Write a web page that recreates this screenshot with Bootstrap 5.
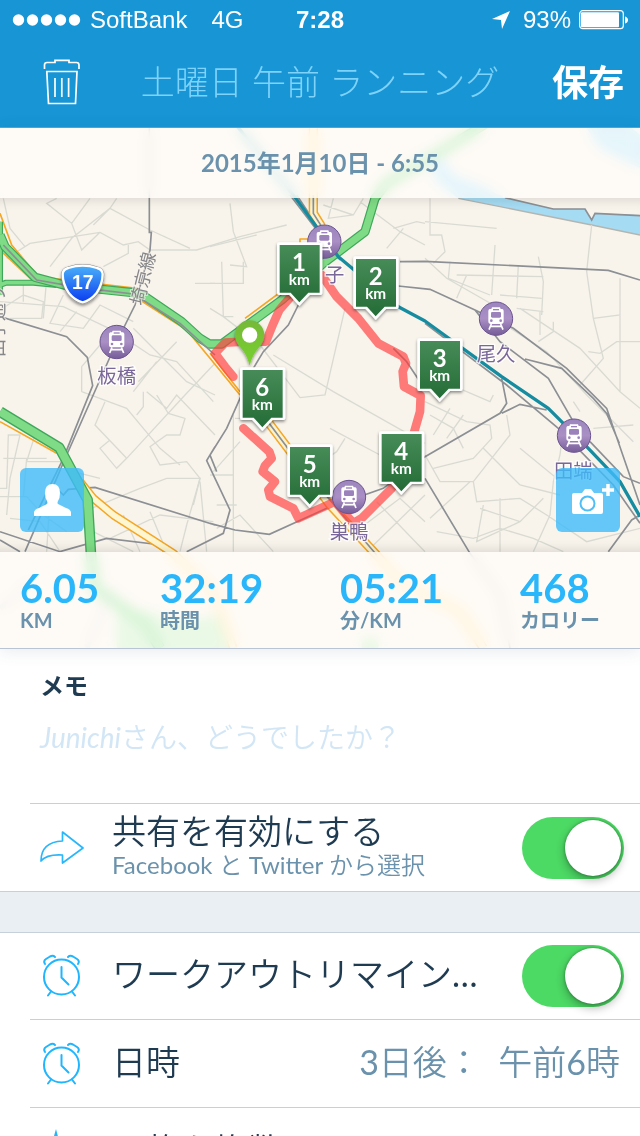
<!DOCTYPE html>
<html lang="ja">
<head>
<meta charset="utf-8">
<meta name="viewport" content="width=device-width, initial-scale=1">
<title>ワークアウト</title>
<link href="https://cdn.jsdelivr.net/npm/bootstrap@5.3.0/dist/css/bootstrap.min.css" rel="stylesheet">
<style>
  :root { --sky:#1795d4; --accent:#29b6fb; --ink:#1f3b52; --slate:#6b92ac; --rule:#c6d0da; --thin: Lato, "Noto Sans CJK JP DemiLight", "Noto Sans CJK JP", sans-serif; }
  body { font-family: Lato, "Noto Sans CJK JP", sans-serif; color: var(--ink); background:#fff; }
  .app-head { background: var(--sky); color:#fff; border-bottom:1px solid #6f9fb8; }
  .status { height:40px; font-family:"Liberation Sans", sans-serif; font-size:24px; display:grid; grid-template-columns:1fr auto 1fr; padding:0 12px; }
  .status svg { flex:none; }
  .nav-row { height:87px; padding-bottom:4px; }
  .title-field { font-size:34px; font-weight:300; color:#fff; min-width:0; font-family:Lato, "Noto Sans CJK JP", sans-serif; }
  .title-field::placeholder { color:#7fd2fa; opacity:1; }
  .bar-btn { width:124px; flex:none; border:0; background:none; color:#fff; padding:0; }
  .save-btn { font-size:36px; font-weight:700; padding-right:16px; line-height:48px; }
  .map-zone { background:#f8f4ec; border-bottom:1px solid #b9c5d4; box-shadow:0 2px 16px rgba(60,80,120,.12); }
  .map-zone > svg { inset:0; }
  .frost { background:rgba(255,253,250,.76); backdrop-filter:blur(6px) saturate(1.4); }
  .date-bar { height:70px; font-size:24px; font-weight:700; color:var(--slate); }
  .map-view { min-height:354px; padding:20px; box-shadow:inset 0 12px 12px -10px rgba(0,0,0,.12), inset 0 -12px 12px -10px rgba(0,0,0,.12); }
  .map-btn { width:64px; height:64px; border:0; border-radius:6px; background:rgba(62,187,250,.8); padding:0; }
  .stats { height:96px; padding:14px 0 0 20px; display:grid; grid-template-columns:140fr 180fr 180fr 120fr; }
  .stats dd { font-size:40px; font-weight:700; line-height:44px; color:var(--accent); margin:0; }
  .stats dt { font-size:20px; font-weight:700; line-height:20px; color:var(--slate); }
  .memo { padding:22px 40px 0; height:154px; }
  .memo-title { font-size:24px; font-weight:700; line-height:30px; }
  .memo-field { display:grid; margin-top:14px; }
  .memo-field > * { grid-area:1/1; font-size:28px; line-height:44px; }
  .memo-field textarea { height:80px; border:0; padding:0; resize:none; outline:0; background:none; }
  .memo-hint { color:#d2e6f6; font-family:var(--thin); pointer-events:none; }
  textarea:not(:placeholder-shown) + .memo-hint { visibility:hidden; }
  .setting { min-height:88px; margin-left:30px; padding:0 16px 0 10px; border-top:1px solid var(--rule); gap:28px; font-family:var(--thin); }
  .setting > svg { flex:none; width:44px; height:48px; }
  .setting-name, .setting-value { font-size:34px; line-height:40px; padding-bottom:4px; }
  .setting-note { font-size:24px; line-height:28px; color:var(--slate); padding-bottom:6px; }
  .setting-value { color:var(--slate); padding-right:4px; white-space:pre; }
  .flush { border-top:0; min-height:86px; }
  .divider { height:42px; background:#eaeff3; border:solid var(--rule); border-width:1px 0; }
  .form-check-input.ios-switch { width:102px; height:62px; border:0; border-radius:31px; margin:0; flex:none; background:#c8ced4; position:relative; }
  .form-check-input.ios-switch:checked { background:#4cd964; }
  .ios-switch::before { content:""; position:absolute; top:3px; left:3px; width:56px; height:56px; border-radius:50%; background:#fff; box-shadow:0 4px 10px rgba(0,0,0,.3), 0 0 3px rgba(0,0,0,.35); }
  .ios-switch:checked::before { left:43px; }
</style>
</head>
<body>
<div class="vh-100 overflow-hidden">
  <header class="app-head">
    <div class="status align-items-center">
      <div class="d-flex align-items-center">
        <svg width="70" height="12" fill="#fff"><circle cx="6.500" cy="6" r="5.700"/><circle cx="20.500" cy="6" r="5.700"/><circle cx="34.500" cy="6" r="5.700"/><circle cx="48.500" cy="6" r="5.700"/><circle cx="62.500" cy="6" r="5.700"/></svg>
        <span class="ms-2">SoftBank</span><span class="ms-3 ps-2">4G</span>
      </div>
      <b>7:28</b>
      <div class="d-flex align-items-center justify-content-end gap-2">
        <svg width="20" height="20" viewBox="0 0 20 20" fill="#fff"><path d="M19 1 1 9l9 1 1 9z"/></svg>
        <span class="ms-1">93%</span>
        <svg width="49" height="20" viewBox="0 0 49 20"><rect x=".7" y=".7" width="43.600" height="18" rx="3" fill="none" stroke="#fff" stroke-width="1.200"/><rect x="2" y="2.200" width="38" height="15" rx="1" fill="#fff"/><path d="M46 6.500q3 1 3 3.500t-3 3.500z" fill="#fff"/></svg>
      </div>
    </div>
    <div class="nav-row d-flex align-items-center">
      <button class="bar-btn" type="button" aria-label="削除">
        <svg width="38" height="46" viewBox="0 0 38 46" fill="none" stroke="#fff" stroke-width="1.700"><path d="M1.500 10V6q0-2.500 2.500-2.500h8V1.300h14v2.200h7.500Q36 3.500 36 6v4M3.800 12.500h30.200L32.500 44.500H5.500zM12 19v19M18.800 19v19M25.600 19v19"/></svg>
      </button>
      <input class="title-field form-control border-0 bg-transparent shadow-none text-center p-0" type="text" placeholder="土曜日 午前 ランニング" aria-label="タイトル">
      <button class="bar-btn save-btn text-end" type="button">保存</button>
    </div>
  </header>

  <section class="map-zone position-relative">
    <svg class="position-absolute w-100 h-100" viewBox="0 -201 1920 1560" preserveAspectRatio="xMidYMid slice" font-family="Noto Sans CJK JP, sans-serif">
      <defs>
        <linearGradient id="flagFill" x2="0" y2="1"><stop stop-color="#478c58"/><stop offset="1" stop-color="#246c37"/></linearGradient>
        <linearGradient id="stopFill" x2="0" y2="1"><stop stop-color="#9c86bd"/><stop offset=".5" stop-color="#a98fc4"/><stop offset="1" stop-color="#775d98"/></linearGradient>
        <linearGradient id="shieldFill" x2="0" y2="1"><stop stop-color="#4ab0f8"/><stop offset="1" stop-color="#0a3cf0"/></linearGradient>
        <linearGradient id="pinFill" x2="0" y2="1"><stop stop-color="#77b83a"/><stop offset="1" stop-color="#76d22c"/></linearGradient>
        <filter id="soft" x="-20%" y="-20%" width="140%" height="150%"><feDropShadow dx="0" dy="5" stdDeviation="5" flood-opacity=".45"/></filter>
        <g id="flag">
          <path d="M6 0H130q6 0 6 6V152q0 6-6 6H98L67 191 37 158H6q-6 0-6-6V6Q0 0 6 0z" fill="#fff" filter="url(#soft)"/>
          <path d="M8 8H128V151H94L67 180 41 151H8z" fill="url(#flagFill)"/>
        </g>
        <g id="station">
          <circle r="50" fill="url(#stopFill)" stroke="#6b5490" stroke-width="3"/>
          <path d="M-12-34H12l2 5h5q4 1 4 6V8q0 8-8 8H-15q-8 0-8-8V-23q0-5 4-6h5z" fill="#fff"/>
          <rect x="-15" y="-20" width="30" height="17" rx="4" fill="#9b82ba"/><rect x="-9" y="-29" width="18" height="4" fill="#9b82ba"/>
          <circle cx="-14" cy="6" r="4" fill="#9b82ba"/><circle cx="14" cy="6" r="4" fill="#9b82ba"/>
          <path d="M-14 16-21 33M14 16 21 33M-17 23H17" stroke="#fff" stroke-width="5"/>
        </g>
      </defs>
      <rect y="-201" width="1920" height="1560" fill="#f8f4ec"/>
      <!-- river -->
      <path d="M1375 10 1775 90 1920 120V60L1785 55 1775 78 1755 42H1660L1515 8 1440-30 1360-60 1330-110 1290-90 1310-40z" fill="#a5dbf3"/>
      <path d="M1740-230 1800-140 1920-80V-180L1860-230z" fill="#a5dbf3"/>
      <path d="M1375 10 1775 90 1920 120" fill="none" stroke="#b5b5b0" stroke-width="4"/>
      <!-- parks -->
      <path d="M350 1240 450 1250 520 1280 680 1260 690 1359H350z" fill="#b4e8b4"/><circle cx="1110" cy="1350" r="26" fill="#b4e8b4"/>
      <!-- minor streets -->
      <g fill="none" stroke="#d9dbd3" stroke-width="4">
        <path d="M10 10 30 100 75 155M20 190 90 145 300 112 370 150 415 140 450 165H590L720 125 860 90M170 10 140 25 215 85 245 165 300 112M350 10 330 40 215 130 150 215M330 40 280 90M215 85 270 10M330 40 450 105 570 160M385 150V175L310 215M585 265H645M0 345 70 300 130 320 125 370H30M70 270V320M140 250 130 370M0 320 190 335 390 430M190 300 150 385 250 400 300 330 400 380M180 410 230 350M245 590V515L300 450M245 590 380 640 480 760 540 810M315 620 285 690 380 790 350 820 300 760 330 735M430 590V635L410 660M380 790 555 600 645 505M400 400 560 560 645 600M390 440 450 480 530 500 640 620M470 600 505 655 555 670 540 720 500 720 450 755 480 810 560 800 600 850 580 930M440 590 500 640 530 600 645 720M415 560 530 440M400 590 470 500"/>
        <path d="M0 880H20L25 720H60L30 850 20 960M80 790 70 905M10 790H140M105 720 80 800H200M0 905H80L130 960 200 1010M150 900 140 1070M30 970 120 980 180 1070M220 830 300 850M250 950 420 880 500 850 600 850 560 990 540 1070M330 1030 480 960 640 980M260 1000 400 1070M370 960 420 1070M450 950 500 1070M600 860 620 1070"/>
        <path d="M690 25 700 110 740 215 690 210M630 155 770 120M665 200 670 365H700M630 265H730V200M780 450 900 608 975 600 1035 340M630 340 670 365 780 450M820 480 1000 590 1275 745M705 670H780L830 730M700 660V1070M990 700 1140 780M1035 730 1010 770 980 790M630 840H700M1180 100 1250 80 1275 85M1080 20 1200 110 1275 150M970 30 1060 60M1000 10 985 70 1060 60 1090 10M1160 160 1210 100M720 740 640 830M650 930H710M650 1000 720 960 820 1070M1130 920 1275 1070M1080 1000 1200 910 1275 980M1100 1070 1275 900"/>
        <path d="M1290 10V120H1325L1335 170 1300 205M1275 80 1490 100M1485 150 1475 300M1615 185 1630 260 1625 360M1275 190 1340 250 1480 330M1350 200 1345 250 1470 300M1370 240 1630 245M1555 210 1550 310M1370 310 1400 240M1500 300 1625 310M1550 340 1630 350M1775 90 1760 230 1780 370 1810 490 1740 570M1780 370 1860 360V250M1860 360V590M1765 470 1800 475 1850 440H1920M1560 340 1740 460 1860 590 1920 640M1500 380 1640 470 1760 600 1900 740M1620 420V350M1660 380 1660 410 1615 440M1275 560 1330 560 1470 620 1480 600M1290 660 1360 700 1390 760M1275 620 1400 680 1470 690 1475 730 1420 790 1300 820M1350 640 1300 720M1390 660 1340 730M1275 780 1320 860 1420 860 1530 720 1520 660M1450 760 1560 870 1680 900M1420 860 1430 920 1560 910 1640 960 1760 1040 1920 1000M1290 970 1410 860M1450 930 1430 1040 1560 980 1630 910M1440 940 1560 980M1500 1070 1500 910M1310 1010 1420 1030 1500 1000 1600 1030 1690 1070M1560 760 1670 850M1690 700 1680 780 1660 860 1650 960 1600 1070M1720 620 1740 650M1780 700 1900 690"/>
      </g>
      <!-- railways -->
      <g fill="none" stroke="#8c8f93" stroke-width="5">
        <path d="M448-201V112H454L450 165 405 330 350 441 200 780 75 1070M0 365 200 425 262 487 278 572 190 790 85 1005M160 870 190 900 205 883 285 877 645 990M0 1010 180 1070 320 1030 460 1047 500 1075M645 755 620 797 645 850 690 945 670 1015 560 1070M0 1035 60 1070M630 985 705 1005 808 1018 980 940 1150 880 1275 785M870 0 1015 190M890 0 1020 195M895 330 865 390 790 470 760 520 680 700 630 780 650 830"/>
        <path d="M1200 200 1275 199 1600 215 1825 226 1920 255M1195 273 1290 283 1425 345 1540 400 1700 520 1820 640 1920 930M1180 460 1220 500 1260 560M1425 345 1500 440 1645 550 1720 680M1575 492 1685 520 1780 610 1820 655 1858 745M1505 550 1520 625 1500 655 1275 785M1505 655 1560 628 1640 645M1275 385 1520 570 1675 700 1840 870 1920 985M1770 740 1870 845 1920 865M1275 850 1410 1075 1500 1200 1530 1359M1920 960 1895 975 1825 1070M1515 8 1660 42H1755L1775 75 1785 55 1920 62"/>
        <path d="M260 1359 340 1180M0 1240 100 1160" stroke="#dcdcdc" stroke-width="16"/>
      </g>
      <!-- trunk roads -->
      <g fill="none" stroke-linejoin="round">
        <path d="M0 55 35 150 115 245 300 267 410 280M0 165 95 255M420 315 560 405 630 490 720 600M630 475 720 590M0 680 170 775M185 750 250 870M735 370 850 285M900 160V132H925" stroke="#f5a623" stroke-width="5"/>
        <path d="M240 860 280 910 340 960 520 1075 640 1190 700 1359" stroke="#f5a623" stroke-width="26"/>
        <path d="M240 860 280 910 340 960 520 1075 640 1190 700 1359" stroke="#fdf6d0" stroke-width="17"/>
        <path d="M940-201V55L965 95M800 675 905 815 990 930 1130 1080 1200 1160 1380 1250 1450 1359" stroke="#f5a623" stroke-width="28"/>
        <path d="M940-201V55L965 95M800 675 905 815 990 930 1130 1080 1200 1160 1380 1250 1450 1359" stroke="#fbf3cf" stroke-width="19"/>
        <path d="M940 0V55L965 95M800 675 905 815 1130 1080" stroke="#8c8f93" stroke-width="5"/>
        <path d="M0 80V300M0 270 18 263H100L170 270" stroke="#3ea75a" stroke-width="18"/>
        <path d="M0 80V300M0 270 18 263H100L170 270" stroke="#7fdb85" stroke-width="11"/>
        <path d="M0 120 15 155 105 247 200 272 400 293 435 305 545 380 600 430 628 447H665L845 315 970 205 1095 110 1125 10 1160-35 1320-130 1460-215" stroke="#3ea75a" stroke-width="28"/>
        <path d="M0 120 15 155 105 247 200 272 400 293 435 305 545 380 600 430 628 447H665L845 315 970 205 1095 110 1125 10 1160-35 1320-130 1460-215" stroke="#7fdb85" stroke-width="21"/>
        <path d="M10 150 110 255 240 278 400 297 540 385 645 480" stroke="#8c8f93" stroke-width="5"/>
        <path d="M0 650 178 758 263 915 273 1080 285 1180 430 1280 480 1359" stroke="#3ea75a" stroke-width="32"/>
        <path d="M0 650 178 758 263 915 273 1080 285 1180 430 1280 480 1359" stroke="#7fdb85" stroke-width="24"/>
        <path d="M700-220 880 0 1015 185 1195 335 1275 378 1505 545 1645 640 1765 760 1860 860 1920 965" stroke="#168ca0" stroke-width="10"/>
      </g>
      <!-- run track -->
      <g fill="none" stroke="#ff3b3b" stroke-opacity=".66" stroke-width="26" stroke-linejoin="round" stroke-linecap="round">
        <path d="M868 310 838 345 818 390 798 440 730 440 675 443 645 475 675 515 700 545"/>
        <path d="M965 240 1010 305 1075 370 1135 445 1210 485 1218 505 1208 530 1212 575 1262 602 1260 650 1240 720 1175 880 1125 930 1085 970 1060 985 1005 920 895 970 880 940 810 905 805 885 825 860 788 830 795 812 815 790 808 770 730 700"/>
      </g>
      <!-- stations -->
      <g>
        <use href="#station" x="350" y="441"/><use href="#station" x="973" y="140"/><use href="#station" x="1047" y="906"/><use href="#station" x="1488" y="371"/><use href="#station" x="1722" y="722"/>
      </g>
      <g font-size="58" fill="#79679a" text-anchor="middle" stroke="#fff" stroke-opacity=".8" stroke-width="8" paint-order="stroke">
        <text x="350" y="565">板橋</text><text x="1004" y="261">子</text><text x="1047" y="1031">巣鴨</text><text x="1488" y="498">尾久</text><text x="1720" y="849">田端</text>
      </g>
      <g font-size="54" fill="#85868a" stroke="#f8f4ec" stroke-opacity=".7" stroke-width="6" paint-order="stroke">
        <text transform="translate(428 334) rotate(-76)">埼京線</text>
        <text transform="translate(12 486) rotate(-90)">山手通り</text>
      </g>
      <!-- route shield -->
      <path d="M205 219q43-14 86 0 16 4 17 18 0 30-19 58-18 22-41 27-23-5-41-27-19-28-19-58 1-14 17-18z" fill="url(#shieldFill)" stroke="#8d8d8d" stroke-width="10" filter="url(#soft)"/>
      <path d="M205 219q43-14 86 0 16 4 17 18 0 30-19 58-18 22-41 27-23-5-41-27-19-28-19-58 1-14 17-18z" fill="url(#shieldFill)" stroke="#fff" stroke-width="7"/>
      <text x="248" y="281" text-anchor="middle" font-family="Liberation Sans, sans-serif" font-weight="700" font-size="58" fill="#fff">17</text>
      <!-- finish pin -->
      <path d="M749 512Q742 480 722 458 705 440 705 420A44 44 0 0 1 793 420Q793 440 776 458 756 480 749 512z" fill="url(#pinFill)" filter="url(#soft)"/><circle cx="749" cy="420" r="23" fill="#fff"/>
      <!-- kilometre flags -->
      <use href="#flag" x="831" y="142"/><use href="#flag" x="1060" y="184"/><use href="#flag" x="1252" y="430"/><use href="#flag" x="1137" y="709"/><use href="#flag" x="862" y="748"/><use href="#flag" x="720" y="517"/>
      <g font-family="Lato, sans-serif" font-weight="700" fill="#fff" text-anchor="middle">
        <g font-size="72"><text x="897" y="228">1</text><text x="1127" y="270">2</text><text x="1319" y="516">3</text><text x="1204" y="795">4</text><text x="929" y="834">5</text><text x="787" y="603">6</text></g>
        <g font-size="46"><text x="898" y="270">km</text><text x="1127" y="312">km</text><text x="1319" y="558">km</text><text x="1204" y="837">km</text><text x="929" y="876">km</text><text x="787" y="645">km</text></g>
      </g>
    </svg>

    <div class="date-bar frost position-relative d-flex align-items-center justify-content-center">2015年1月10日 - 6:55</div>
    <div class="map-view position-relative d-flex align-items-end justify-content-between">
      <button class="map-btn" type="button" aria-label="現在地">
        <svg width="64" height="64" viewBox="0 0 64 64" fill="#fff"><path d="M14 48v-4q1-3 5-4l8-4q1-1 0-3-2-3-2-8 0-9 7.500-9T40 25q0 5-2 8-1 2 0 3l8 4q4 1 5 4v4z"/></svg>
      </button>
      <button class="map-btn" type="button" aria-label="写真を追加">
        <svg width="64" height="64" viewBox="0 0 64 64"><path d="M18 25h8l3-4h6l3 4h7q2 0 2 2v17q0 2-2 2H18q-2 0-2-2V27q0-2 2-2z" fill="#fff"/><path d="M46 22h12M52 16v12" stroke="#fff" stroke-width="3.500"/><circle cx="31.500" cy="35.500" r="7" fill="none" stroke="#4fbef8" stroke-width="2"/></svg>
      </button>
    </div>
    <dl class="stats frost position-relative mb-0">
      <div class="d-flex flex-column-reverse justify-content-end"><dt>KM</dt><dd>6.05</dd></div>
      <div class="d-flex flex-column-reverse justify-content-end"><dt>時間</dt><dd>32:19</dd></div>
      <div class="d-flex flex-column-reverse justify-content-end"><dt>分/KM</dt><dd>05:21</dd></div>
      <div class="d-flex flex-column-reverse justify-content-end"><dt>カロリー</dt><dd>468</dd></div>
    </dl>
  </section>

  <main>
    <section class="memo">
      <label class="memo-title d-block" for="memo">メモ</label>
      <div class="memo-field">
        <textarea id="memo" placeholder=" "></textarea>
        <div class="memo-hint"><i>Junichi</i>さん、どうでしたか？</div>
      </div>
    </section>

    <div class="setting d-flex align-items-center">
      <svg viewBox="0 0 44 48" fill="none" stroke="#29b6fb" stroke-width="1.700" stroke-linejoin="round"><path d="M1 37Q1 18 22.500 17V8L43 24 22.500 39V31Q7 30 1 37z"/></svg>
      <label class="flex-grow-1" for="share"><span class="setting-name d-block pb-0">共有を有効にする</span><span class="setting-note d-block">Facebook と Twitter から選択</span></label>
      <input class="form-check-input ios-switch" type="checkbox" role="switch" id="share" checked>
    </div>
    <div class="divider"></div>
    <div class="setting flush d-flex align-items-center">
      <svg viewBox="0 0 44 48" fill="none" stroke="#1fb6ff" stroke-width="2" stroke-linecap="round"><circle cx="21.500" cy="25" r="17.500"/><path d="M21.500 15v10.500l7 7M11 39.500l-3 4M32 39.500l3 4M5 12q-2-3 1-5l4-2.500q3-1.500 5 .5M38 12q2-3-1-5l-4-2.500q-3-1.500-5 .5"/></svg>
      <label class="setting-name flex-grow-1 text-truncate" for="remind">ワークアウトリマイン…</label>
      <input class="form-check-input ios-switch" type="checkbox" role="switch" id="remind" checked>
    </div>
    <div class="setting d-flex align-items-center">
      <svg viewBox="0 0 44 48" fill="none" stroke="#1fb6ff" stroke-width="2" stroke-linecap="round"><circle cx="21.500" cy="25" r="17.500"/><path d="M21.500 15v10.500l7 7M11 39.500l-3 4M32 39.500l3 4M5 12q-2-3 1-5l4-2.500q3-1.500 5 .5M38 12q2-3-1-5l-4-2.500q-3-1.500-5 .5"/></svg>
      <span class="setting-name flex-grow-1">日時</span>
      <span class="setting-value">3日後：  午前6時</span>
    </div>
    <div class="setting d-flex align-items-center">
      <svg viewBox="0 0 44 48" fill="#1fb6ff"><path d="M16 1q2 8 4 14l14 1-11 9 4 14-11-8-11 8 4-14L-2 16l14-1z"/></svg>
      <span class="setting-name flex-grow-1">再施を複数</span>
    </div>
  </main>
</div>
<script src="https://cdn.jsdelivr.net/npm/bootstrap@5.3.0/dist/js/bootstrap.bundle.min.js"></script>
</body>
</html>
